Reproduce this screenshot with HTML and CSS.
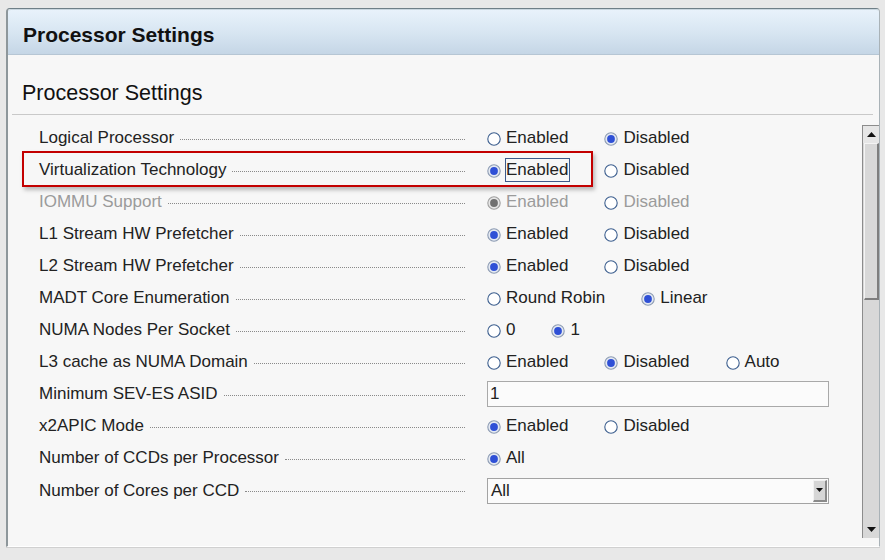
FILE: index.html
```html
<!DOCTYPE html>
<html>
<head>
<meta charset="utf-8">
<link rel="stylesheet" href="styles.css">
</head>
<body>
<div class="panel">
  <div class="header">Processor Settings</div>
  <div class="section-title">Processor Settings</div>
  <div class="body">
    <div class="list">
      <div class="row">
        <div class="label"><span>Logical Processor</span><i class="leader"></i></div>
        <div class="opts">
          <span class="opt"><svg class="radio" viewBox="0 0 14 14"><circle cx="7" cy="7" r="6.2" class="ring"/></svg>Enabled</span>
          <span class="opt"><svg class="radio" viewBox="0 0 14 14"><circle cx="7" cy="7" r="6.2" class="ring on"/><circle cx="7" cy="7" r="3.9" class="dot"/></svg>Disabled</span>
        </div>
      </div>
      <div class="row">
        <span class="highlight"></span>
        <div class="label"><span>Virtualization Technology</span><i class="leader"></i></div>
        <div class="opts">
          <span class="opt"><svg class="radio" viewBox="0 0 14 14"><circle cx="7" cy="7" r="6.2" class="ring on"/><circle cx="7" cy="7" r="3.9" class="dot"/></svg><span class="focus">Enabled</span></span>
          <span class="opt"><svg class="radio" viewBox="0 0 14 14"><circle cx="7" cy="7" r="6.2" class="ring"/></svg>Disabled</span>
        </div>
      </div>
      <div class="row disabled">
        <div class="label"><span>IOMMU Support</span><i class="leader"></i></div>
        <div class="opts">
          <span class="opt"><svg class="radio" viewBox="0 0 14 14"><circle cx="7" cy="7" r="6.2" class="ring off"/><circle cx="7" cy="7" r="3.9" class="dot grey"/></svg>Enabled</span>
          <span class="opt"><svg class="radio" viewBox="0 0 14 14"><circle cx="7" cy="7" r="6.2" class="ring"/></svg>Disabled</span>
        </div>
      </div>
      <div class="row">
        <div class="label"><span>L1 Stream HW Prefetcher</span><i class="leader"></i></div>
        <div class="opts">
          <span class="opt"><svg class="radio" viewBox="0 0 14 14"><circle cx="7" cy="7" r="6.2" class="ring on"/><circle cx="7" cy="7" r="3.9" class="dot"/></svg>Enabled</span>
          <span class="opt"><svg class="radio" viewBox="0 0 14 14"><circle cx="7" cy="7" r="6.2" class="ring"/></svg>Disabled</span>
        </div>
      </div>
      <div class="row">
        <div class="label"><span>L2 Stream HW Prefetcher</span><i class="leader"></i></div>
        <div class="opts">
          <span class="opt"><svg class="radio" viewBox="0 0 14 14"><circle cx="7" cy="7" r="6.2" class="ring on"/><circle cx="7" cy="7" r="3.9" class="dot"/></svg>Enabled</span>
          <span class="opt"><svg class="radio" viewBox="0 0 14 14"><circle cx="7" cy="7" r="6.2" class="ring"/></svg>Disabled</span>
        </div>
      </div>
      <div class="row">
        <div class="label"><span>MADT Core Enumeration</span><i class="leader"></i></div>
        <div class="opts">
          <span class="opt"><svg class="radio" viewBox="0 0 14 14"><circle cx="7" cy="7" r="6.2" class="ring"/></svg>Round Robin</span>
          <span class="opt"><svg class="radio" viewBox="0 0 14 14"><circle cx="7" cy="7" r="6.2" class="ring on"/><circle cx="7" cy="7" r="3.9" class="dot"/></svg>Linear</span>
        </div>
      </div>
      <div class="row">
        <div class="label"><span>NUMA Nodes Per Socket</span><i class="leader"></i></div>
        <div class="opts">
          <span class="opt"><svg class="radio" viewBox="0 0 14 14"><circle cx="7" cy="7" r="6.2" class="ring"/></svg>0</span>
          <span class="opt"><svg class="radio" viewBox="0 0 14 14"><circle cx="7" cy="7" r="6.2" class="ring on"/><circle cx="7" cy="7" r="3.9" class="dot"/></svg>1</span>
        </div>
      </div>
      <div class="row">
        <div class="label"><span>L3 cache as NUMA Domain</span><i class="leader"></i></div>
        <div class="opts">
          <span class="opt"><svg class="radio" viewBox="0 0 14 14"><circle cx="7" cy="7" r="6.2" class="ring"/></svg>Enabled</span>
          <span class="opt"><svg class="radio" viewBox="0 0 14 14"><circle cx="7" cy="7" r="6.2" class="ring on"/><circle cx="7" cy="7" r="3.9" class="dot"/></svg>Disabled</span>
          <span class="opt"><svg class="radio" viewBox="0 0 14 14"><circle cx="7" cy="7" r="6.2" class="ring"/></svg>Auto</span>
        </div>
      </div>
      <div class="row">
        <div class="label"><span>Minimum SEV-ES ASID</span><i class="leader"></i></div>
        <div class="opts">
          <div class="input">1</div>
        </div>
      </div>
      <div class="row">
        <div class="label"><span>x2APIC Mode</span><i class="leader"></i></div>
        <div class="opts">
          <span class="opt"><svg class="radio" viewBox="0 0 14 14"><circle cx="7" cy="7" r="6.2" class="ring on"/><circle cx="7" cy="7" r="3.9" class="dot"/></svg>Enabled</span>
          <span class="opt"><svg class="radio" viewBox="0 0 14 14"><circle cx="7" cy="7" r="6.2" class="ring"/></svg>Disabled</span>
        </div>
      </div>
      <div class="row">
        <div class="label"><span>Number of CCDs per Processor</span><i class="leader"></i></div>
        <div class="opts">
          <span class="opt"><svg class="radio" viewBox="0 0 14 14"><circle cx="7" cy="7" r="6.2" class="ring on"/><circle cx="7" cy="7" r="3.9" class="dot"/></svg>All</span>
        </div>
      </div>
      <div class="row tall">
        <div class="label"><span>Number of Cores per CCD</span><i class="leader"></i></div>
        <div class="opts">
          <div class="select"><span class="sel-text">All</span><span class="sel-btn"><svg width="7" height="4" viewBox="0 0 7 4"><path d="M0 0H7L3.5 4Z" fill="#111"/></svg></span></div>
        </div>
      </div>
    </div>
    <div class="scrollbar">
      <div class="sb-btn"><svg width="9" height="5" viewBox="0 0 9 5"><path d="M0 5H9L4.5 0Z" fill="#111"/></svg></div>
      <div class="sb-thumb"></div>
      <div class="sb-track"></div>
      <div class="sb-btn down"><svg width="9" height="5" viewBox="0 0 9 5"><path d="M0 0H9L4.5 5Z" fill="#111"/></svg></div>
    </div>
  </div>
</div>
</body>
</html>
```
FILE: styles.css
```css
html, body {
  margin: 0;
  padding: 0;
}
body {
  background: #e8e8e8;
  font-family: "Liberation Sans", Arial, sans-serif;
  color: #222;
  width: 885px;
  height: 560px;
  overflow: hidden;
}
.panel {
  margin: 8px 0 0 6px;
  width: 871px;
  height: 537px;
  background: #f7f7f7;
  border-top: 1px solid #6f7f87;
  border-left: 2px solid #8e979b;
  border-right: 1px solid #a9b2b7;
  border-bottom: 1px solid #ffffff;
  border-radius: 4px 4px 0 0;
  display: flex;
  flex-direction: column;
  box-shadow: 0 1px 0 #d0d0d0;
}
.header {
  height: 46px;
  flex: none;
  box-sizing: border-box;
  border-top: 1px solid #c9d6df;
  border-bottom: 1px solid #b6c6d4;
  background: linear-gradient(#e8f2fb, #d8e6f2 50%, #c5d6e6);
  border-radius: 3px 3px 0 0;
  font-weight: bold;
  font-size: 21px;
  padding-left: 15px;
  display: flex;
  align-items: center;
  padding-top: 6px;
  color: #111;
}
.section-title {
  flex: none;
  height: 60px;
  box-sizing: border-box;
  padding: 26px 0 0 10px;
  font-size: 21.5px;
  line-height: 24px;
  color: #111;
  border-bottom: 1px solid #c9c9c9;
  margin: 0 6px 0 4px;
}
.body {
  flex: 1;
  display: flex;
  min-height: 0;
}
.list {
  flex: 1;
  padding: 7px 0 0 31px;
}
.row {
  position: relative;
  height: 32px;
  display: flex;
  align-items: center;
  font-size: 17px;
}
.row.tall {
  height: 33px;
}
.label {
  width: 426px;
  display: flex;
  align-items: center;
  flex: none;
}
.leader {
  flex: 1;
  height: 0;
  border-bottom: 1px dotted #8a8a8a;
  margin-left: 6px;
  transform: translateY(1px);
}
.opts {
  display: flex;
  align-items: center;
  padding-left: 22px;
}
.opt {
  display: flex;
  align-items: center;
  margin-right: 36px;
}
.radio {
  width: 14px;
  height: 14px;
  margin-right: 5px;
  transform: translateY(1px);
  flex: none;
}
.ring {
  fill: #ffffff;
  stroke: #3d5f8f;
  stroke-width: 1.1;
}
.ring.on {
  fill: #e4e9f2;
  stroke: #8d9cb3;
}
.ring.off {
  fill: #e6e6e6;
  stroke: #a0a0a0;
}
.dot {
  fill: #2f50d6;
}
.dot.grey {
  fill: #707070;
}
.disabled {
  color: #9b9b9b;
}
.highlight {
  position: absolute;
  left: -17px;
  top: -3px;
  width: 567px;
  height: 32px;
  border: 2px solid #c30000;
  box-shadow: 2px 3px 4px rgba(0, 0, 0, 0.25);
  pointer-events: none;
}
.focus {
  border: 1px solid #3e5a8a;
  padding: 0 1px 1px 0;
  margin-left: -1px;
  margin-right: -2px;
  line-height: 21px;
}
.input {
  width: 342px;
  height: 26px;
  box-sizing: border-box;
  border: 1px solid #a9a9a9;
  background: #fbfbfb;
  padding-left: 2px;
  line-height: 24px;
  font-size: 17px;
  color: #222;
}
.select {
  width: 342px;
  height: 26px;
  box-sizing: border-box;
  border: 1px solid #a3a3a3;
  background: #fbfbfb;
  display: flex;
  align-items: center;
  padding: 1px;
}
.sel-text {
  flex: 1;
  padding-left: 2px;
  font-size: 17px;
  line-height: 22px;
}
.sel-btn {
  width: 14px;
  height: 22px;
  box-sizing: border-box;
  background: #d6d6d6;
  border-top: 1px solid #f2f2f2;
  border-left: 1px solid #f2f2f2;
  border-right: 2px solid #8a8a8a;
  border-bottom: 2px solid #8a8a8a;
  display: flex;
  align-items: center;
  justify-content: center;
}
.scrollbar {
  width: 16px;
  flex: none;
  margin: 10px 0 8px 0;
  display: flex;
  flex-direction: column;
  background: #d8d8d8;
  border-left: 1px solid #8c8c8c;
  border-top: 1px solid #8c8c8c;
}
.sb-btn {
  height: 17px;
  flex: none;
  display: flex;
  align-items: center;
  justify-content: center;
  background: #e6e6e6;
}
.sb-btn.down {
  background: #d8d8d8;
}
.sb-thumb {
  height: 157px;
  flex: none;
  box-sizing: border-box;
  background: #d8d8d8;
  border-top: 1px solid #f4f4f4;
  border-left: 1px solid #f4f4f4;
  border-right: 2px solid #7e7e7e;
  border-bottom: 2px solid #7e7e7e;
  margin-left: 1px;
}
.sb-track {
  flex: 1;
}
```
